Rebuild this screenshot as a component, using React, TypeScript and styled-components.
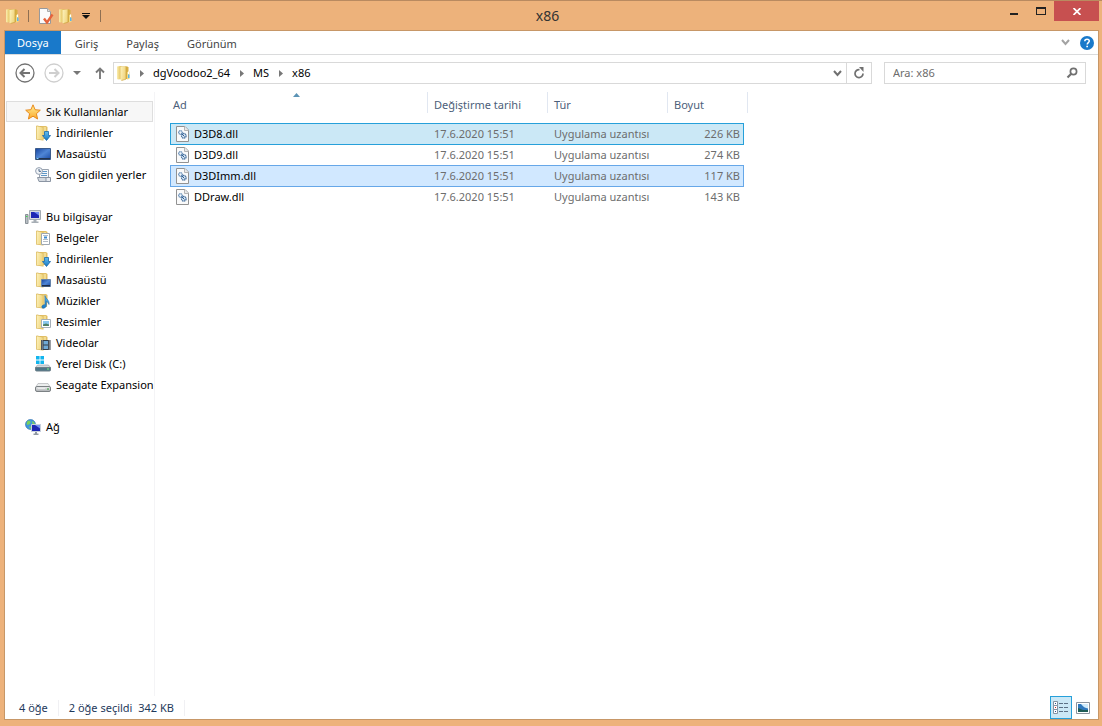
import React from "react";
import styled, { createGlobalStyle, css } from "styled-components";

const Global = createGlobalStyle`
  *, *::before, *::after { box-sizing: border-box; }
  body { margin: 0; background: #edb27b; }
  body, button, input, table { font: 12px/16px "Noto Sans", "Open Sans", sans-serif; color: #000; }
  button { padding: 0; border: 0; background: none; cursor: default; }
  svg { display: block; flex: none; }
`;

const Frame = styled.div`
  min-height: 100vh;
  display: flex;
  flex-direction: column;
  padding: 0 3px 6px 4px;
  background: #edb27b;
  border-top: 1px solid #b98a60;
`;

const TitleBar = styled.header`
  height: 29px;
  display: grid;
  grid-template-columns: 1fr auto 1fr;
  align-items: start;
`;

const QuickAccess = styled.div`
  display: flex;
  align-items: center;
  height: 29px;
  padding-left: 1px;
`;

const QuickButton = styled.button`
  width: 20px;
  height: 20px;
  display: flex;
  align-items: center;
  justify-content: center;
`;

const Divider = styled.span<{ $gap: number }>`
  width: 1px;
  height: 12px;
  margin: 0 ${(p) => p.$gap}px;
  background: #8f6f52;
`;

const Title = styled.h1`
  margin: 0;
  padding-right: 8px;
  font-size: 14px;
  line-height: 29px;
  font-weight: 400;
  color: #333;
`;

const WindowButtons = styled.div`
  display: flex;
  justify-content: flex-end;
`;

const WindowButton = styled.button<{ $close?: boolean }>`
  width: ${(p) => (p.$close ? 45 : 27)}px;
  height: 20px;
  display: flex;
  align-items: center;
  justify-content: center;
  background: ${(p) => (p.$close ? "#c75050" : "transparent")};
`;

const Client = styled.div`
  flex: 1;
  display: flex;
  flex-direction: column;
  background: #fff;
  border: 1px solid #c79767;
`;

const Ribbon = styled.nav`
  height: 24px;
  display: flex;
  align-items: stretch;
  border-bottom: 1px solid #dadbdc;
`;

const RibbonTab = styled.button<{ $active?: boolean }>`
  padding: ${(p) => (p.$active ? "0 12px" : "2px 14px 0")};
  font-size: 11px;
  color: ${(p) => (p.$active ? "#fff" : "#444")};
  background: ${(p) => (p.$active ? "#1979ca" : "transparent")};
`;

const RibbonTools = styled.div`
  margin-left: auto;
  padding-right: 4px;
  display: flex;
  align-items: center;
  gap: 10px;
`;

const AddressRow = styled.div`
  display: flex;
  align-items: center;
  padding: 7px 12px 8px 10px;
`;

const NavButtons = styled.div`
  display: flex;
  align-items: center;
  width: 98px;
  gap: 9px;
`;

const AddressBar = styled.div`
  flex: 1;
  height: 22px;
  display: flex;
  align-items: center;
  padding-left: 2px;
  border: 1px solid #d9d9d9;
`;

const Trail = styled.ol`
  display: flex;
  margin: 0 0 0 8px;
  padding: 0;
  list-style: none;
`;

const TrailItem = styled.li`
  display: flex;
  align-items: center;
`;

const Crumb = styled.button`
  margin: 0 10px 0 9px;
  font-size: 11px;
`;

const AddressTools = styled.div`
  margin-left: auto;
  display: flex;
  align-self: stretch;
`;

const AddressButton = styled.button<{ $divided?: boolean }>`
  width: ${(p) => (p.$divided ? 25 : 18)}px;
  display: flex;
  align-items: center;
  justify-content: center;
  border-left: ${(p) => (p.$divided ? "1px solid #d9d9d9" : "0")};
`;

const Search = styled.label`
  width: 202px;
  height: 22px;
  margin-left: 12px;
  padding: 0 7px 0 8px;
  display: flex;
  align-items: center;
  border: 1px solid #d9d9d9;
`;

const SearchInput = styled.input`
  flex: 1;
  min-width: 0;
  padding: 0;
  border: 0;
  outline: 0;
  font-size: 11px;
  background: none;
  &::placeholder { color: #6d6d6d; opacity: 1; }
`;

const Body = styled.div`
  flex: 1;
  display: flex;
`;

const Sidebar = styled.nav`
  width: 150px;
  padding: 9px 1px 0;
  border-right: 1px solid #f4f4f6;
`;

const Group = styled.ul`
  list-style: none;
  margin: 0 0 21px;
  padding: 0;
`;

const Place = styled.a<{ $root?: boolean; $current?: boolean }>`
  height: 21px;
  display: flex;
  align-items: center;
  gap: 5px;
  padding-left: ${(p) => (p.$root ? 18 : 28)}px;
  border: 1px solid ${(p) => (p.$current ? "#dedede" : "transparent")};
  background: ${(p) => (p.$current ? "#f7f7f7" : "transparent")};
  font-size: 11px;
  color: #000;
  text-decoration: none;
  white-space: nowrap;
`;

const Files = styled.main`
  flex: 1;
  padding-left: 15px;
`;

const Table = styled.table`
  display: block;
  width: 578px;
  font-size: 11px;
  thead, tbody { display: block; }
  tbody { padding-top: 10px; }
`;

const rowGrid = css`
  display: grid;
  align-items: center;
  text-align: left;
`;

const HeadRow = styled.tr`
  ${rowGrid}
  grid-template-columns: 258px 120px 120px 80px;
`;

const HeadCell = styled.th<{ $first?: boolean }>`
  position: relative;
  height: 21px;
  padding: 5px 0 0 ${(p) => (p.$first ? 3 : 6)}px;
  font-weight: 400;
  color: #4c607a;
  border-right: 1px solid #e1e7f1;
`;

const SortMark = styled.svg`
  position: absolute;
  top: 1px;
  left: 123px;
`;

const FileRow = styled.tr<{ $state?: "focus" | "selected" }>`
  ${rowGrid}
  grid-template-columns: 257px 120px 120px 75px;
  width: 574px;
  height: 22px;
  margin-bottom: -1px;
  border: 1px solid transparent;
  ${(p) => p.$state === "focus" && css`background: #cbe8f6; border-color: #26a0da;`}
  ${(p) => p.$state === "selected" && css`background: #d1e8ff; border-color: #66a7e8;`}
`;

const Cell = styled.td<{ $right?: boolean }>`
  padding: 0 3px 0 6px;
  color: #6d6d6d;
  text-align: ${(p) => (p.$right ? "right" : "left")};
`;

const NameCell = styled.td`
  display: flex;
  align-items: center;
  gap: 3px;
  padding: 0 0 0 4px;
`;

const StatusBar = styled.footer`
  height: 23px;
  display: flex;
  align-items: center;
  padding: 0 4px 0 14px;
  font-size: 11px;
  color: #1e395b;
`;

const StatusItem = styled.span`
  padding-right: 10px;
  margin-right: 10px;
  border-right: 1px solid #f0f0f3;
  white-space: pre;
`;

const ViewButtons = styled.div`
  margin-left: auto;
  display: flex;
`;

const ViewButton = styled.button<{ $on?: boolean }>`
  width: 22px;
  height: 23px;
  display: flex;
  align-items: center;
  justify-content: center;
  border: 1px solid ${(p) => (p.$on ? "#26a0da" : "transparent")};
  background: ${(p) => (p.$on ? "#cbe8f6" : "transparent")};
`;

const Defs = styled.svg`
  position: absolute;
`;

const Gradients = () => (
  <Defs width="0" height="0" aria-hidden="true">
    <linearGradient id="leaf" x1="0" x2="1" y2="0.3">
      <stop offset="0" stopColor="#fdf2bd" />
      <stop offset="1" stopColor="#f0d57e" />
    </linearGradient>
    <linearGradient id="gold" x1="0" x2="1" y2="0">
      <stop offset="0" stopColor="#fbeeb0" />
      <stop offset="1" stopColor="#dcb341" />
    </linearGradient>
    <linearGradient id="screen" x1="0" y1="0" x2="1" y2="1">
      <stop offset="0" stopColor="#16429c" />
      <stop offset="0.5" stopColor="#4f86d6" />
      <stop offset="1" stopColor="#1a4aa5" />
    </linearGradient>
    <linearGradient id="star" y2="1" x2="0">
      <stop offset="0" stopColor="#fff19a" />
      <stop offset="1" stopColor="#fba82a" />
    </linearGradient>
    <linearGradient id="drive" y2="1" x2="0">
      <stop offset="0" stopColor="#f1f2f2" />
      <stop offset="1" stopColor="#a9adb0" />
    </linearGradient>
    <linearGradient id="blue" y2="1" x2="0">
      <stop offset="0" stopColor="#63bdf0" />
      <stop offset="1" stopColor="#1678c4" />
    </linearGradient>
  </Defs>
);

const Icon = ({ children }: { children: React.ReactNode }) => (
  <svg width="16" height="16" viewBox="0 0 16 16" aria-hidden="true">{children}</svg>
);

const FolderShape = () => (
  <>
    <path d="M5 1h6l1.500 1v5L12 14H5z" fill="#e3c067" />
    <path d="M8 2h3v11H8z" fill="#f3dc92" />
    <path d="M1 1l1-.5L8.500 2v13.500H8L1 14.500z" fill="#d9b75c" />
    <path d="M1.700 1.300L7.800 2.600v12.200L1.700 13.900z" fill="url(#leaf)" />
  </>
);

const Folder = () => (
  <Icon>
    <path d="M1 1.500L4 1l2 .5V14l-4 .5-1-.5z" fill="url(#gold)" />
    <path d="M6 1.500h5.500l1 1V14H6z" fill="#d8b044" />
    <path d="M4.500 2l5.500-.700V14L5.500 15.500l-1-.5z" fill="url(#leaf)" />
    <path d="M10 1.300v12.900L5.500 15.500" fill="none" stroke="#cda53d" strokeWidth=".7" />
    <path d="M11 7l2.500-.5V14L11 14.500z" fill="#f1d983" />
    <path d="M12 9.500h1.500V13H12z" fill="#5cb3ea" />
    <path d="M12.500 6.500V9" stroke="#fff" />
  </Icon>
);

const DownArrow = () => (
  <path d="M9.500 6.500h4v4h2l-4 5-4-5h2z" fill="url(#blue)" stroke="#1768ab" strokeWidth=".8" />
);

const icons: Record<string, React.ReactNode> = {
  star: (
    <Icon>
      <path d="M8 .8l2.100 4.900 5.200.5-3.900 3.500 1.200 5.300L8 12.200 3.400 15l1.200-5.300L.7 6.200l5.200-.5z" fill="url(#star)" stroke="#e88a1c" strokeLinejoin="round" />
    </Icon>
  ),
  download: <Icon><FolderShape /><DownArrow /></Icon>,
  desktop: (
    <Icon>
      <path d="M.5 2.500h15v11H.5z" fill="url(#screen)" stroke="#3c5c8c" />
      <path d="M1 12h14v1.500H1z" fill="#22344f" />
      <path d="M1.500 12.500h2" stroke="#7fd0ff" />
    </Icon>
  ),
  recent: (
    <Icon>
      <path d="M4.500 2.500h9v10h-9z" fill="#f7f8fa" stroke="#9aa3af" />
      <path d="M7 4.500h5M7 6.500h5M6 8.500h6" stroke="#5f97c6" />
      <path d="M2.500 10.500h8.500l1.500 4H4z" fill="#d5dae0" stroke="#8b95a3" />
      <path d="M11 10.500h4.500v4H11z" fill="#e7eaee" stroke="#8b95a3" />
      <circle cx="4" cy="4" r="3.400" fill="#f2f5f8" stroke="#94a0b0" />
      <path d="M4 2v2.300h2" fill="none" stroke="#4a6484" />
    </Icon>
  ),
  computer: (
    <Icon>
      <path d="M.5 5.500h2.500v9H.5z" fill="#b9c0c5" stroke="#8a9298" />
      <path d="M1 7.500h1.500" stroke="#3ddc4a" />
      <path d="M4.500 1.500h11v9h-11z" fill="#d7dce2" stroke="#a2abb3" />
      <path d="M6 3h8v6H6z" fill="#1d27b4" />
      <path d="M9 3h5v3.500z" fill="#6f8cf0" />
      <path d="M8.500 11h3v1.500h2V14h-7v-1.500h2z" fill="#a7aeb5" />
    </Icon>
  ),
  documents: (
    <Icon>
      <FolderShape />
      <path d="M6.500 3.500h8v11h-8z" fill="#fff" stroke="#9ea8b2" />
      <path d="M8 5.500h5M8 9.500h5M8 11.500h5" stroke="#b4bdc6" />
      <path d="M9 7.500h3" stroke="#3a8ad0" strokeWidth="2" />
    </Icon>
  ),
  folderDesktop: (
    <Icon>
      <FolderShape />
      <path d="M6.500 7.500h9v7h-9z" fill="url(#screen)" stroke="#6583ab" />
      <path d="M7 13h8v1.500H7z" fill="#1f2e48" />
    </Icon>
  ),
  music: (
    <Icon>
      <FolderShape />
      <path d="M10 2.500c.5 3.500 4.500 4 4 9-.5-2-1.700-2.700-2.700-3v4c0 1.500-1.500 2.700-3 2.700-2 0-2-3 .7-3.400h1z" fill="url(#blue)" stroke="#1768ab" strokeWidth=".6" />
    </Icon>
  ),
  pictures: (
    <Icon>
      <FolderShape />
      <path d="M6.500 5.500h9v8h-9z" fill="#fff" stroke="#a5afb8" />
      <path d="M8 7h6v5H8z" fill="#8cc8ee" />
      <path d="M8 10.500l3-1 3 1V12H8z" fill="#4f7f64" />
    </Icon>
  ),
  videos: (
    <Icon>
      <FolderShape />
      <path d="M6 5h9.500v10H6z" fill="#343c46" />
      <path d="M8.500 6H13v3.500H8.500zM8.500 10.500H13V14H8.500z" fill="#6fa9d6" />
      <path d="M7.200 5.500v9M14.300 5.500v9" stroke="#dfe4e9" strokeDasharray="1 1" />
    </Icon>
  ),
  system: (
    <Icon>
      <path d="M1 0h3.600v3.600H1zM5.400 0H9v3.600H5.400zM1 4.400h3.600V8H1zM5.400 4.400H9V8H5.400z" fill="#12b5ee" />
      <path d="M2.500 9h11l2 2.500H.5z" fill="#d4dade" stroke="#8e979d" strokeWidth=".6" />
      <path d="M.5 11.500h15V14q0 1-1 1h-13q-1 0-1-1z" fill="#4f7787" stroke="#6d7f88" />
      <path d="M13 12v2" stroke="#7df07d" />
    </Icon>
  ),
  drive: (
    <Icon>
      <path d="M3 6.500h10l2.500 4H.5z" fill="#eceeee" stroke="#b1b5b7" strokeWidth=".7" />
      <rect x=".5" y="9.500" width="15" height="5" rx="1.500" fill="url(#drive)" stroke="#7c8184" />
      <path d="M3 11.500h7" stroke="#e9ebeb" />
      <path d="M13 11v2" stroke="#2d9f36" />
    </Icon>
  ),
  network: (
    <Icon>
      <circle cx="5.500" cy="5.500" r="5" fill="#3f97df" stroke="#2a69a8" strokeWidth=".6" />
      <path d="M3 1.500q3 0 2.500 2T2.500 6Q.5 5 3 1.500M7 2q3 1 3 4-3 0-3-4M4 7.500l3 .5-2 2z" fill="#7bd15a" />
      <path d="M6.500 5.500h9v7h-9z" fill="#1d27b4" stroke="#c8d0da" />
      <path d="M10 6h5v3.500z" fill="#7390f2" />
      <path d="M10 13h2v1.500h1.500V16h-5v-1.500H10z" fill="#8f98a1" />
    </Icon>
  ),
};

const DllIcon = () => (
  <Icon>
    <path d="M1.500.5h8.500l3.500 3.500v11.500h-12z" fill="#fafafa" stroke="#929292" />
    <path d="M9.500.5v4h4" fill="#e8e8e8" stroke="#b4b4b4" />
    <circle cx="5.500" cy="6.500" r="1.800" fill="#eef4fa" stroke="#5c86b2" strokeWidth="1.200" strokeDasharray="1.200 .4" />
    <circle cx="8.800" cy="9.800" r="2.300" fill="#dce8f4" stroke="#48729f" strokeWidth="1.300" strokeDasharray="1.400 .4" />
    <path d="M6.500 7.500l3 3" stroke="#2c5c90" />
  </Icon>
);

const CrumbArrow = () => (
  <svg width="4" height="7" viewBox="0 0 4 7" aria-hidden="true"><path d="M0 0l4 3.500L0 7z" fill="#777" /></svg>
);

const Chevron = ({ color }: { color: string }) => (
  <svg width="9" height="7" viewBox="0 0 9 7" aria-hidden="true">
    <path d="M1 1l3.500 4L8 1" fill="none" stroke={color} strokeWidth="2" />
  </svg>
);

const Round = ({ color, flip }: { color: string; flip?: boolean }) => (
  <svg width="20" height="20" viewBox="0 0 20 20" aria-hidden="true">
    <circle cx="10" cy="10" r="9" fill="none" stroke={color} strokeWidth="1.300" />
    <path d={flip ? "M5 10h9M10.500 6l4 4-4 4" : "M15 10H6M9.500 6l-4 4 4 4"} fill="none" stroke={color} strokeWidth="2" />
  </svg>
);

type PlaceItem = [label: string, icon: string];
const places: PlaceItem[][] = [
  [["Sık Kullanılanlar", "star"], ["İndirilenler", "download"], ["Masaüstü", "desktop"], ["Son gidilen yerler", "recent"]],
  [
    ["Bu bilgisayar", "computer"], ["Belgeler", "documents"], ["İndirilenler", "download"], ["Masaüstü", "folderDesktop"],
    ["Müzikler", "music"], ["Resimler", "pictures"], ["Videolar", "videos"], ["Yerel Disk (C:)", "system"], ["Seagate Expansion", "drive"],
  ],
  [["Ağ", "network"]],
];

const trail = ["dgVoodoo2_64", "MS", "x86"];

const files: { name: string; size: string; state?: "focus" | "selected" }[] = [
  { name: "D3D8.dll", size: "226 KB", state: "focus" },
  { name: "D3D9.dll", size: "274 KB" },
  { name: "D3DImm.dll", size: "117 KB", state: "selected" },
  { name: "DDraw.dll", size: "143 KB" },
];

export default function App() {
  return (
    <Frame>
      <Global />
      <Gradients />
      <TitleBar>
        <QuickAccess>
          <Folder />
          <Divider $gap={7} />
          <QuickButton aria-label="Özellikler">
            <Icon>
              <path d="M1.500.5h8l3 3v12h-11z" fill="#fbfbfb" stroke="#98999b" />
              <path d="M9.500.5v3h3" fill="#ddd" stroke="#aaa" />
              <path d="M6 10.500l3 4 5.500-8" fill="none" stroke="#e5633c" strokeWidth="2.400" />
            </Icon>
          </QuickButton>
          <QuickButton aria-label="Yeni klasör"><Folder /></QuickButton>
          <QuickButton aria-label="Hızlı erişimi özelleştir">
            <svg width="8" height="6" viewBox="0 0 8 6"><path d="M0 0h8v1H0zM0 2h8L4 6z" fill="#111" /></svg>
          </QuickButton>
          <Divider $gap={4} />
        </QuickAccess>
        <Title>x86</Title>
        <WindowButtons>
          <WindowButton aria-label="Simge durumuna küçült">
            <svg width="8" height="8" viewBox="0 0 8 8"><path d="M0 6h8v2H0z" fill="#222" /></svg>
          </WindowButton>
          <WindowButton aria-label="Ekranı kapla">
            <svg width="10" height="8" viewBox="0 0 10 8"><path d="M0 0h10v8H0zM1 2v5h8V2z" fill="#222" fillRule="evenodd" /></svg>
          </WindowButton>
          <WindowButton $close aria-label="Kapat">
            <svg width="8" height="7" viewBox="0 0 8 7"><path d="M.5 0l7 7M7.500 0l-7 7" stroke="#fff" strokeWidth="1.700" /></svg>
          </WindowButton>
        </WindowButtons>
      </TitleBar>
      <Client>
        <Ribbon>
          <RibbonTab $active>Dosya</RibbonTab>
          <RibbonTab>Giriş</RibbonTab>
          <RibbonTab>Paylaş</RibbonTab>
          <RibbonTab>Görünüm</RibbonTab>
          <RibbonTools>
            <button aria-label="Şeridi genişlet"><Chevron color="#a3a3a3" /></button>
            <button aria-label="Yardım">
              <svg width="14" height="14" viewBox="0 0 14 14">
                <circle cx="7" cy="7" r="7" fill="#1979ca" />
                <path d="M4.800 5.200C4.800 2.500 9.300 2.500 9.300 5.100 9.300 6.700 7.200 6.700 7.200 8.600" fill="none" stroke="#fff" strokeWidth="1.500" />
                <path d="M6.300 9.700h1.700v1.600H6.300z" fill="#fff" />
              </svg>
            </button>
          </RibbonTools>
        </Ribbon>
        <AddressRow>
          <NavButtons>
            <button aria-label="Geri"><Round color="#737373" /></button>
            <button aria-label="İleri"><Round color="#cfcfcf" flip /></button>
            <button aria-label="Son konumlar">
              <svg width="8" height="4" viewBox="0 0 8 4"><path d="M0 0h8L4 4z" fill="#777" /></svg>
            </button>
            <QuickButton aria-label="Yukarı">
              <svg width="10" height="12" viewBox="0 0 10 12"><path d="M5 12V2M1 5.500l4-4 4 4" fill="none" stroke="#7a7a7a" strokeWidth="1.900" /></svg>
            </QuickButton>
          </NavButtons>
          <AddressBar>
            <Folder />
            <Trail>
              {trail.map((name) => (
                <TrailItem key={name}><CrumbArrow /><Crumb>{name}</Crumb></TrailItem>
              ))}
            </Trail>
            <AddressTools>
              <AddressButton aria-label="Önceki konumlar"><Chevron color="#707070" /></AddressButton>
              <AddressButton $divided aria-label="Yenile">
                <svg width="12" height="12" viewBox="0 0 12 12">
                  <path d="M6.500 2.600A4 4 0 1 0 10 6.500" fill="none" stroke="#707070" strokeWidth="1.700" />
                  <path d="M6 0h4.500v5z" fill="#707070" />
                </svg>
              </AddressButton>
            </AddressTools>
          </AddressBar>
          <Search>
            <SearchInput type="search" placeholder="Ara: x86" aria-label="Ara: x86" />
            <svg width="12" height="12" viewBox="0 0 12 12" aria-hidden="true">
              <circle cx="7.500" cy="4.500" r="3.100" fill="none" stroke="#707070" strokeWidth="1.700" />
              <path d="M5.500 6.500L1.500 10.500" stroke="#707070" strokeWidth="2.200" />
            </svg>
          </Search>
        </AddressRow>
        <Body>
          <Sidebar>
            {places.map((group, g) => (
              <Group key={g}>
                {group.map(([label, icon], i) => (
                  <li key={label}>
                    <Place href="#" $root={i === 0} $current={g === 0 && i === 0}>{icons[icon]}{label}</Place>
                  </li>
                ))}
              </Group>
            ))}
          </Sidebar>
          <Files>
            <Table>
              <thead>
                <HeadRow>
                  <HeadCell $first>
                    Ad
                    <SortMark width="7" height="4" viewBox="0 0 7 4"><path d="M3.500 0L7 4H0z" fill="#5b93b5" /></SortMark>
                  </HeadCell>
                  <HeadCell>Değiştirme tarihi</HeadCell>
                  <HeadCell>Tür</HeadCell>
                  <HeadCell>Boyut</HeadCell>
                </HeadRow>
              </thead>
              <tbody>
                {files.map((f) => (
                  <FileRow key={f.name} $state={f.state}>
                    <NameCell><DllIcon />{f.name}</NameCell>
                    <Cell>17.6.2020 15:51</Cell>
                    <Cell>Uygulama uzantısı</Cell>
                    <Cell $right>{f.size}</Cell>
                  </FileRow>
                ))}
              </tbody>
            </Table>
          </Files>
        </Body>
        <StatusBar>
          <StatusItem>4 öğe</StatusItem>
          <StatusItem>{"2 öğe seçildi  342 KB"}</StatusItem>
          <ViewButtons>
            <ViewButton $on aria-label="Ayrıntılar">
              <svg width="16" height="14" viewBox="0 0 16 14">
                <path d="M.5.500h4v4h-4zM.5 4.500h4v4h-4zM.5 8.500h4v4h-4z" fill="#fff" stroke="#8593a3" />
                <path d="M2 2h1v1H2zM2 10h1v1H2z" fill="#244f8f" />
                <path d="M2 6h1v1H2z" fill="#c22" />
                <path d="M6 2.500h4M11 2.500h4M6 6.500h4M11 6.500h4M6 10.500h4M11 10.500h4" stroke="#5c7186" />
              </svg>
            </ViewButton>
            <ViewButton aria-label="Büyük simgeler">
              <svg width="14" height="12" viewBox="0 0 14 12">
                <path d="M.5.500h13v11H.5z" fill="#fff" stroke="#8b949e" />
                <path d="M2 2h10v8H2z" fill="#2f78bd" />
                <path d="M5 2h7v4.500Q8 6 5 2" fill="#cfeafa" />
                <path d="M2 6l5 2h5v2H2z" fill="#1f5d56" />
              </svg>
            </ViewButton>
          </ViewButtons>
        </StatusBar>
      </Client>
    </Frame>
  );
}
